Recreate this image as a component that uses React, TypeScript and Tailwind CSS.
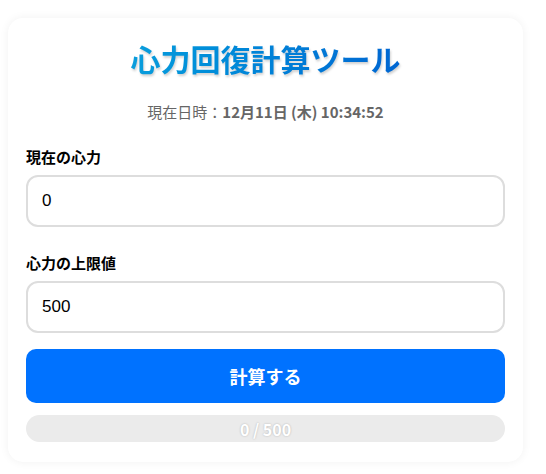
import { useState } from "react";

export default function App() {
  const [current, setCurrent] = useState("0");
  const [max, setMax] = useState("500");

  const jp = { fontFamily: '"Noto Sans CJK JP", "Noto Sans", sans-serif' };

  return (
    <div className="min-h-[474px] bg-white pt-[18px] pl-2" style={jp}>
      <div className="w-[515px] rounded-[15px] bg-white px-[18px] pt-[20px] pb-[20px] shadow-[0_0_10px_rgba(0,0,0,0.06)]">
        {/* Title */}
        <h1 className="text-center text-[30px] leading-[40px] font-bold">
          <span className="bg-gradient-to-r from-[#0a9ddc] to-[#0066d2] bg-clip-text text-transparent drop-shadow-[1px_2px_1px_rgba(0,0,0,0.18)]">
            心力回復計算ツール
          </span>
        </h1>

        <p className="mt-[24px] text-center text-[15px] leading-[20px] text-[#666]">
          現在日時：<span className="font-bold">12月11日 (木) 10:34:52</span>
        </p>

        {/* Current */}
        <label className="mt-[25px] block text-[15px] leading-[20px] font-bold text-black">
          現在の心力
        </label>
        <input
          type="text"
          value={current}
          onChange={(e) => setCurrent(e.target.value)}
          className="mt-[8px] block h-[52px] w-full rounded-[12px] border-2 border-[#dddddd] px-[14px] text-[17px] text-black outline-none"
          style={{ fontFamily: '"Liberation Sans", Arial, sans-serif' }}
        />

        {/* Max */}
        <label className="mt-[26px] block text-[15px] leading-[20px] font-bold text-black">
          心力の上限値
        </label>
        <input
          type="text"
          value={max}
          onChange={(e) => setMax(e.target.value)}
          className="mt-[8px] block h-[52px] w-full rounded-[12px] border-2 border-[#dddddd] px-[14px] text-[17px] text-black outline-none"
          style={{ fontFamily: '"Liberation Sans", Arial, sans-serif' }}
        />

        <button className="mt-[16px] block h-[54px] w-full rounded-[10px] bg-[#0072ff] text-[18px] font-bold text-white">
          計算する
        </button>

        {/* Progress */}
        <div className="mt-[12px] flex h-[27px] w-full items-center justify-center rounded-full bg-[#ebebeb]">
          <span className="text-[16px] font-bold text-white [text-shadow:0_0_2px_rgba(0,0,0,0.25)]">
            0 / 500
          </span>
        </div>
      </div>
    </div>
  );
}
